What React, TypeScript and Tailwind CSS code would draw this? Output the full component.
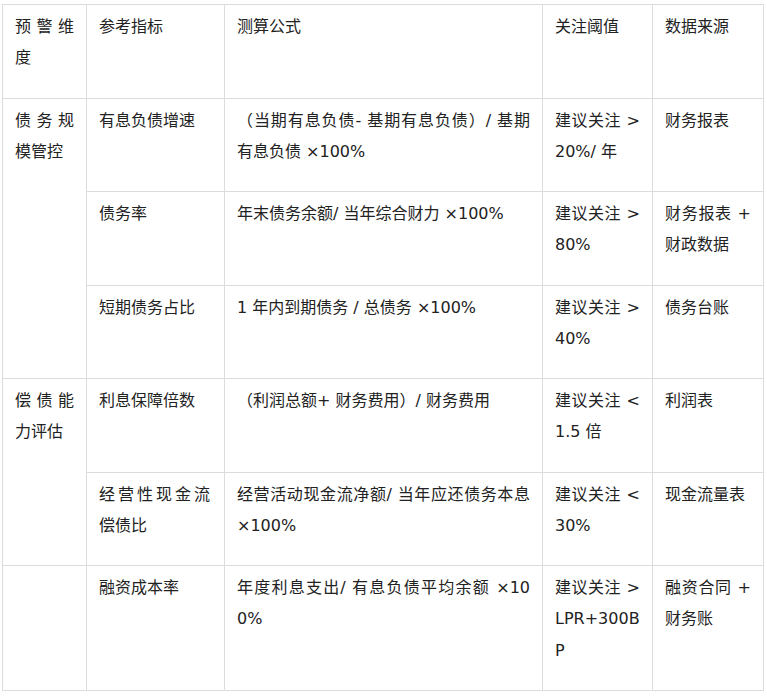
import React from "react";

const td = "border border-[#dcdcdc] align-top px-3 pt-[6px] pb-[24px] text-justify break-all";
const td2 = "border border-[#dcdcdc] align-top pl-3 pr-[14px] pt-[6px] pb-[24px] text-justify break-all";

export default function App() {
  return (
    <div
      className="bg-white min-h-screen pt-[4px] pl-[2px] text-[#222] text-[16px] leading-[31.25px]"
      style={{ fontFamily: '"DejaVu Sans", "Noto Sans CJK SC", sans-serif' }}
    >
      <table className="border-collapse table-fixed w-[761px]">
        <colgroup>
          <col className="w-[84px]" />
          <col className="w-[138px]" />
          <col className="w-[318px]" />
          <col className="w-[110px]" />
          <col className="w-[111px]" />
        </colgroup>
        <tbody>
          <tr>
            <td className={td}>预警维度</td>
            <td className={td2}>参考指标</td>
            <td className={td}>测算公式</td>
            <td className={td}>关注阈值</td>
            <td className={td}>数据来源</td>
          </tr>
          <tr>
            <td className={td} rowSpan={3}>债务规模管控</td>
            <td className={td2}>有息负债增速</td>
            <td className={td}>（当期有息负债- 基期有息负债）/ 基期有息负债 ×100%</td>
            <td className={td}>建议关注 &gt; 20%/ 年</td>
            <td className={td}>财务报表</td>
          </tr>
          <tr>
            <td className={td2}>债务率</td>
            <td className={td}>年末债务余额/ 当年综合财力 ×100%</td>
            <td className={td}>建议关注 &gt; 80%</td>
            <td className={td}>财务报表 + 财政数据</td>
          </tr>
          <tr>
            <td className={td2}>短期债务占比</td>
            <td className={td}>1 年内到期债务 / 总债务 ×100%</td>
            <td className={td}>建议关注 &gt; 40%</td>
            <td className={td}>债务台账</td>
          </tr>
          <tr>
            <td className={td} rowSpan={2}>偿债能力评估</td>
            <td className={td2}>利息保障倍数</td>
            <td className={td}>（利润总额+ 财务费用）/ 财务费用</td>
            <td className={td}>建议关注 &lt; 1.5 倍</td>
            <td className={td}>利润表</td>
          </tr>
          <tr>
            <td className={td2}>经营性现金流偿债比</td>
            <td className={td}>经营活动现金流净额/ 当年应还债务本息 ×100%</td>
            <td className={td}>建议关注 &lt; 30%</td>
            <td className={td}>现金流量表</td>
          </tr>
          <tr>
            <td className={td}></td>
            <td className={td2}>融资成本率</td>
            <td className={td}>年度利息支出/ 有息负债平均余额 ×100%</td>
            <td className={td}>建议关注 &gt; LPR+300BP</td>
            <td className={td}>融资合同 + 财务账</td>
          </tr>
        </tbody>
      </table>
    </div>
  );
}
